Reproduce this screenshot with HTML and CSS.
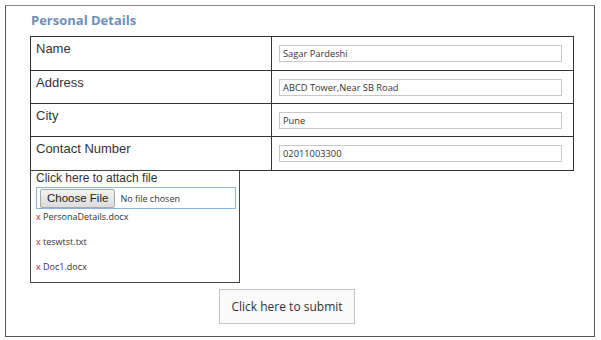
FILE: index.html
```html
<!DOCTYPE html>
<html>
<head>
<meta charset="utf-8">
<link rel="stylesheet" href="styles.css">
</head>
<body>
<div class="frame">
  <h2 class="title">Personal Details</h2>
  <table class="details">
    <tr class="tall">
      <td class="label">Name</td>
      <td class="field"><div class="input">Sagar Pardeshi</div></td>
    </tr>
    <tr>
      <td class="label">Address</td>
      <td class="field"><div class="input">ABCD Tower,Near SB Road</div></td>
    </tr>
    <tr>
      <td class="label">City</td>
      <td class="field"><div class="input">Pune</div></td>
    </tr>
    <tr class="tall">
      <td class="label">Contact Number</td>
      <td class="field"><div class="input">02011003300</div></td>
    </tr>
  </table>
  <div class="attach">
    <div class="attach-label">Click here to attach file</div>
    <div class="file-input">
      <span class="choose">Choose File</span>
      <span class="nofile">No file chosen</span>
    </div>
    <ul class="files">
      <li><span class="x">x</span> PersonaDetails.docx</li>
      <li><span class="x">x</span> teswtst.txt</li>
      <li><span class="x">x</span> Doc1.docx</li>
    </ul>
  </div>
  <div class="actions">
    <button class="submit">Click here to submit</button>
  </div>
</div>
</body>
</html>
```
FILE: styles.css
```css
html, body {
  margin: 0;
  padding: 0;
  background: #fff;
}
body {
  font-family: "Liberation Sans", Arial, sans-serif;
  color: #333;
}
.frame {
  margin: 5px 0 0 5px;
  width: 588px;
  height: 330px;
  border: 1px solid #555;
  border-top-color: #888;
  box-sizing: content-box;
}
.title {
  margin: 0;
  padding: 6px 0 0 25px;
  height: 24px;
  box-sizing: border-box;
  font-family: "Open Sans", sans-serif;
  font-weight: 700;
  font-size: 13px;
  line-height: 16px;
  color: #6e8fba;
}
.details {
  margin: 6px 0 0 24px;
  border-collapse: collapse;
  width: 544px;
  border: 1px solid #333;
}
.details tr {
  height: 33px;
}
.details tr.tall {
  height: 34px;
}
.details td {
  border: 1px solid #333;
  padding: 0;
  vertical-align: top;
}
.details .label {
  width: 241px;
  font-size: 13px;
  padding: 4px 0 0 5px;
  box-sizing: border-box;
  line-height: 16px;
  color: #333;
}
.details .field {
  padding: 8px 0 0 7px;
}
.input {
  width: 283px;
  height: 17px;
  box-sizing: border-box;
  border: 1px solid #c8c8c8;
  font-family: "Open Sans", sans-serif;
  font-size: 9.3px;
  line-height: 15px;
  padding-left: 3px;
  color: #333;
}
.attach {
  margin: -1px 0 0 24px;
  width: 210px;
  height: 113px;
  box-sizing: border-box;
  border: 1px solid #444;
  padding: 1px 0 0 5px;
}
.attach-label {
  font-size: 12px;
  line-height: 13px;
  color: #333;
}
.file-input {
  margin-top: 2px;
  width: 200px;
  height: 22px;
  box-sizing: border-box;
  border: 1px solid #8db3dd;
  display: flex;
  align-items: center;
  padding-left: 3px;
  gap: 5px;
}
.choose {
  font-size: 11.5px;
  height: 17px;
  line-height: 17px;
  padding: 0 6px;
  border: 1px solid #a9a9a9;
  border-radius: 2px;
  background: linear-gradient(#f2f2f2, #dddddd);
  color: #222;
}
.nofile {
  font-family: "Open Sans", sans-serif;
  font-size: 9px;
  color: #333;
}
.files {
  list-style: none;
  margin: 1px 0 0 0;
  padding: 0;
  display: flex;
  flex-direction: column;
  gap: 12px;
}
.files li {
  font-family: "Open Sans", sans-serif;
  font-size: 9px;
  line-height: 13px;
  color: #333;
}
.files .x {
  color: #c0262d;
}
.actions {
  padding: 6px 0 0 213px;
}
.submit {
  width: 136px;
  height: 35px;
  margin: 0;
  border: 1px solid #c4c4c4;
  background: #fafafa;
  font-family: "Open Sans", sans-serif;
  font-size: 12px;
  color: #333;
  padding: 0;
}
```
